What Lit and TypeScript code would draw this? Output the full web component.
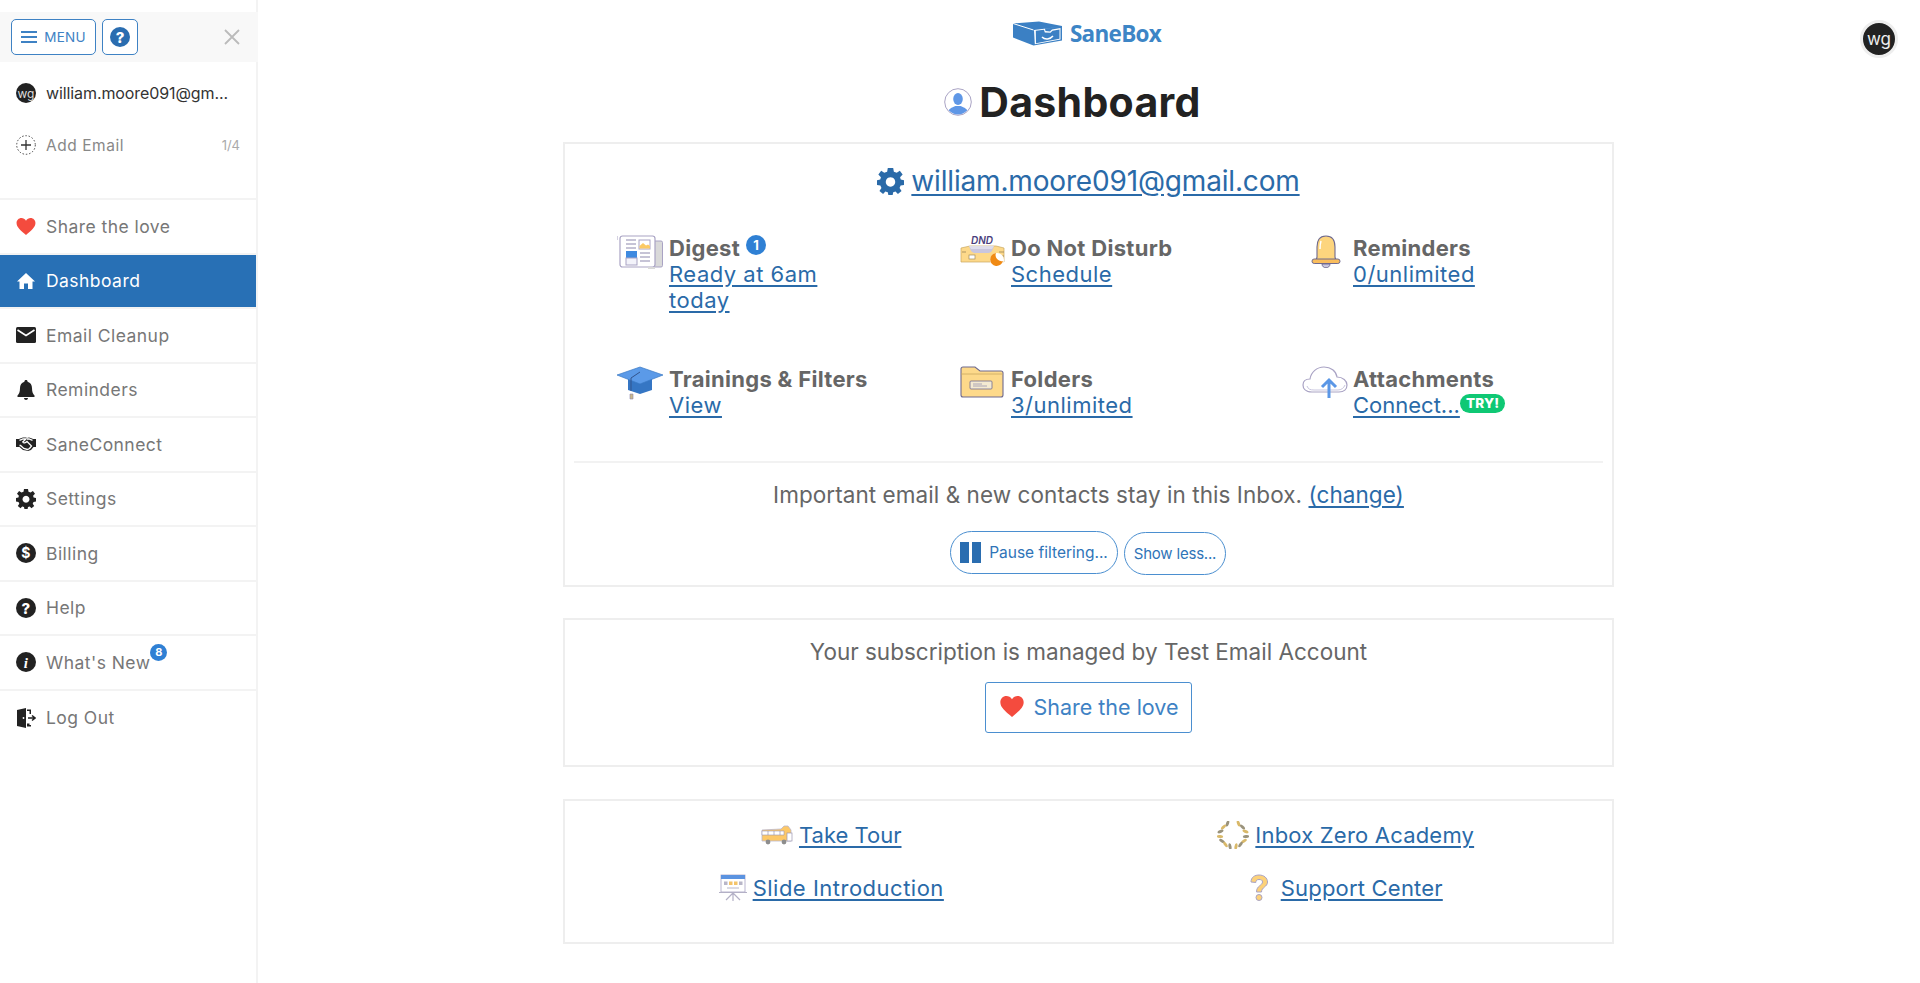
import { LitElement, html, css, svg } from "lit";
import { customElement } from "lit/decorators.js";

const heart = (w: number, h: number) => html`<svg width=${w} height=${h} viewBox="0 0 20 18"><path fill="#f44b3e" d="M10 18 C4 13 0 9.800 0 5.400 C0 2.300 2.300 0 5.200 0 C7 0 8.900 1 10 2.800 C11.100 1 13 0 14.800 0 C17.700 0 20 2.300 20 5.400 C20 9.800 16 13 10 18Z"/></svg>`;

const navIcons: Record<string, any> = {
  heart: heart(20, 17),
  home: html`<svg width="20" height="20" viewBox="0 0 20 20"><path fill="currentColor" d="M10 2 L19 10.500 H16.500 V18 H12 V12.500 H8 V18 H3.500 V10.500 H1Z"/></svg>`,
  mail: html`<svg width="20" height="16" viewBox="0 0 20 16"><rect width="20" height="16" rx="1.500" fill="currentColor"/><path d="M1.500 3 L10 8.500 L18.500 3" fill="none" stroke="#fff" stroke-width="1.600"/></svg>`,
  bell: html`<svg width="18" height="20" viewBox="0 0 18 20"><path fill="currentColor" d="M9 0 C10 0 10.600 .7 10.600 1.700 C13.600 2.500 15 5 15 8 C15 12 16 14 17.500 15.500 V17 H.5 V15.500 C2 14 3 12 3 8 C3 5 4.400 2.500 7.400 1.700 C7.400 .7 8 0 9 0Z M7 18 H11 C11 19.300 10 20 9 20 C8 20 7 19.300 7 18Z"/></svg>`,
  shake: html`<svg width="20" height="14" viewBox="0 0 20 14"><path fill="currentColor" d="M0 2 H3 L4 1.500 L7 .5 H10 L11 1 L13 .5 L16 1.500 L17 2 H20 V10 H17.500 L15 13 L12 14 L10 13.500 L7 13 L3.500 10 H0Z"/><path fill="none" stroke="#fff" stroke-width="1.300" d="M3.500 3.300 L7 2 H10 L6.800 5 C7.500 6.300 9.500 6 11 4.500 L15.500 9 L13.500 11.500 L11.500 12.500 L7.800 11.500 L4.500 8.500 L3.500 8.500 M16.500 3.300 L13 2 H11"/></svg>`,
  gear: html`<svg width="20" height="20" viewBox="0 0 20 20"><path fill="currentColor" fill-rule="evenodd" d="M8 0 H12 L12.500 2.700 L14.600 3.600 L16.900 2 L19 4.800 L17.100 6.800 L17.600 8.500 L20 9 V12.500 L17.500 13 L16.700 14.800 L18.200 17 L15.500 19.200 L13.700 17.400 L12 18 L11.600 20 H8.400 L8 18 L6.200 17.400 L4.500 19.200 L1.800 17 L3.300 14.800 L2.500 13 L0 12.500 V9 L2.400 8.500 L2.900 6.800 L1 4.800 L3.100 2 L5.400 3.600 L7.500 2.700Z M10 6.800 A3.500 3.500 0 1 0 10.001 6.800Z"/></svg>`,
  dollar: html`<svg width="20" height="20" viewBox="0 0 20 20"><circle cx="10" cy="10" r="10" fill="currentColor"/><text x="10" y="15" text-anchor="middle" font-size="14" font-weight="700" fill="#fff" font-family="Inter, sans-serif">$</text></svg>`,
  help: html`<svg width="20" height="20" viewBox="0 0 20 20"><circle cx="10" cy="10" r="10" fill="currentColor"/><text x="10" y="15.500" text-anchor="middle" font-size="15" font-weight="800" fill="#fff" font-family="Inter, sans-serif">?</text></svg>`,
  info: html`<svg width="20" height="20" viewBox="0 0 20 20"><circle cx="10" cy="10" r="10" fill="currentColor"/><text x="10" y="15.500" text-anchor="middle" font-size="15" font-weight="700" font-style="italic" fill="#fff" font-family="Liberation Serif, serif">i</text></svg>`,
  logout: html`<svg width="19" height="20" viewBox="0 0 19 20"><path fill="currentColor" d="M0 2 L9 0 V20 L0 18Z M10 1.500 H14 V6 H12.500 V3 H10Z M10 15.500 H12.500 V17 H14 V18.500 H10Z"/><circle cx="6.500" cy="10" r=".9" fill="#fff"/><path d="M11 10 H17.500 M15 7.500 L18 10 L15 12.500" stroke="currentColor" stroke-width="1.500" fill="none"/></svg>`,
};

const logo = html`<svg width="50" height="25" viewBox="0 0 50 25"><path fill="#3b80c4" d="M0 2.500 L26 .5 L49 5 L49 19.500 L20.500 24.500 L0 16.500Z"/><path fill="#fff" d="M21 9 L47.500 5.800 L32 7.800 L32.500 10 L37 10.500 L39 8.500 L47.500 7 V18.500 L21.800 23.300Z"/><path fill="#3b80c4" d="M22.800 9.800 L31 8.800 L31.800 11.500 L37.500 11.800 L39.500 9.800 L46.500 8.600 V17.800 L23 22.200Z"/><path fill="none" stroke="#fff" stroke-width="1.500" d="M29 16 C32 19 37 18.500 40 15"/><path fill="none" stroke="#fff" stroke-width="1" d="M20.500 9 L0 2.500"/></svg>`;

const person = html`<svg width="28" height="28" viewBox="0 0 28 28"><circle cx="14" cy="14" r="13.300" fill="#fff" stroke="#a9a3c4" stroke-width="1"/><clipPath id="pc"><circle cx="14" cy="14" r="12.500"/></clipPath><g clip-path="url(#pc)" fill="#5f97e6"><ellipse cx="14" cy="11" rx="4.800" ry="6"/><path d="M3 28 C3 21 8 19.500 11.500 18 H16.500 C20 19.500 25 21 25 28Z"/></g></svg>`;

const bigGear = html`<svg width="27" height="27" viewBox="0 0 20 20"><path fill="#2a6aa8" fill-rule="evenodd" d="M8 0 H12 L12.500 2.700 L14.600 3.600 L16.900 2 L19 4.800 L17.100 6.800 L17.600 8.500 L20 9 V12.500 L17.500 13 L16.700 14.800 L18.200 17 L15.500 19.200 L13.700 17.400 L12 18 L11.600 20 H8.400 L8 18 L6.200 17.400 L4.500 19.200 L1.800 17 L3.300 14.800 L2.500 13 L0 12.500 V9 L2.400 8.500 L2.900 6.800 L1 4.800 L3.100 2 L5.400 3.600 L7.500 2.700Z M10 6.800 A3.500 3.500 0 1 0 10.001 6.800Z"/></svg>`;

const digest = html`<svg width="46" height="36" viewBox="0 0 46 36"><rect x="36" y="6" width="9.500" height="26" rx="1.500" fill="#d9d9d9" stroke="#a9a3c4"/><rect x="3" y="1" width="35" height="31" rx="2.500" fill="#fff" stroke="#a9a3c4" stroke-width="1.200"/><path d="M9 5 H19 M9 9 H19 M9 13 H19 M23 18 H33 M23 22 H33 M23 26 H33" stroke="#8d88ad" stroke-width="1"/><rect x="22" y="5" width="11" height="9" fill="#fff" stroke="#a9a3c4"/><path d="M22.500 13.500 V11 L26 8 L29 10.500 L31 9.500 L33 11 V13.500Z" fill="#fbc964"/><rect x="9" y="16" width="11" height="11" fill="#3f8ae0"/><rect x="9" y="23" width="11" height="7" fill="#f3f3fa" stroke="#a9a3c4"/><path d="M0 1 V5" stroke="#a9a3c4"/><rect x="31" y="32" width="7" height="2" fill="#d9d9d9"/></svg>`;

const dnd = html`<svg class="nudge" width="45" height="33" viewBox="0 0 45 33"><text x="22" y="9" text-anchor="middle" font-size="10" font-style="italic" font-weight="600" fill="#4a3f7c" font-family="Inter, sans-serif">DND</text><path d="M1 13 L10 11 H36 L44 13 V27 H1Z" fill="#fdd98a" stroke="#c9a860" stroke-width=".7"/><path d="M9 11 H34 C32 17 31 18 27 18 H16 C12 18 11 17 9 11Z" fill="#c9c6de"/><path d="M9 11 L11 14 H32 L34 11" fill="#fff" opacity=".4"/><rect x="9" y="20" width="6" height="4" fill="#fff" stroke="#a08c5b" stroke-width=".7"/><path d="M2 17 H6 M39 17 H44 M39 21 H44" stroke="#8a7a50" stroke-width=".7"/><circle cx="37" cy="25" r="7" fill="#fff"/><path d="M36 18 A6.500 6.500 0 1 0 43 26 A6 6 0 0 1 36 18Z" fill="#f08a14"/></svg>`;

const bellY = html`<svg class="bell" width="30" height="33" viewBox="0 0 30 33"><path d="M15 1 C22 1 24 6 24 12 V22 C24 24 25 25 27 25.500 H3 C5 25 6 24 6 22 V12 C6 6 8 1 15 1Z" fill="#fdd57e" stroke="#6f6a8f" stroke-width="1.100"/><rect x="1" y="24" width="28" height="4.500" rx="2.200" fill="#f9bd5d" stroke="#6f6a8f" stroke-width="1"/><path d="M11 29 C11 34 19 34 19 29Z" fill="#c9c6de" stroke="#6f6a8f" stroke-width=".9"/><path d="M10 6 C9 9 9 11 9 14" stroke="#fff" stroke-width="1.500" fill="none"/></svg>`;

const cap = html`<svg width="46" height="34" viewBox="0 0 46 34"><path d="M11 13 V24 L23 28 L35 24 V13Z" fill="#3576c4"/><path d="M0 9 L23 1 L46 9 L23 18Z" fill="#5b9ae8" stroke="#3b7ac4" stroke-width=".7"/><path d="M23 6 L14 12 V25" fill="none" stroke="#32548d" stroke-width="1"/><path d="M13 28 H16 L16 33 H13Z" fill="#c9b88a" stroke="#8d88ad" stroke-width=".6"/></svg>`;

const folder = html`<svg class="nudge" width="44" height="32" viewBox="0 0 44 32"><path d="M1 3 C1 1.500 2 1 3 1 H15 L20 5 H41 C42.500 5 43 6 43 7 V29 C43 30.500 42 31 41 31 H3 C2 31 1 30.500 1 29Z" fill="#fdd98a" stroke="#6f6a8f" stroke-width="1.100"/><path d="M1 8 H43" stroke="#c9a860" stroke-width=".8"/><rect x="10" y="15" width="22" height="8" rx="1" fill="#f4ead1" stroke="#6f6a8f" stroke-width=".8"/><path d="M13 18 H22 M13 20 H27" stroke="#9a96b0" stroke-width=".8"/></svg>`;

const cloud = html`<svg class="nudge" width="46" height="33" viewBox="0 0 46 33"><path d="M10 26 C3 26 1 22 1 19 C1 15 4 13 8 13 C9 6 15 1 22 1 C29 1 34 5 35 11 C41 11 45 15 45 19 C45 23 42 26 37 26Z" fill="#fff" stroke="#a9a3c4" stroke-width="1.200"/><path d="M5 20 C6 23 8 24 12 24 H36 C39 24 42 22 43 19" fill="none" stroke="#c9c6de" stroke-width="1"/><path d="M27 32 V15 M20 21 L27 14 L34 21" fill="none" stroke="#5b97e6" stroke-width="3"/></svg>`;

const bus = html`<svg width="32" height="20" viewBox="0 0 32 20"><path d="M1 5 L20 4 L23 1 H27 L30 5 V16 H1Z" fill="#fdc867" stroke="#b9b6cc" stroke-width=".8"/><path d="M1 6 H23 V10 H1Z" fill="#fff" stroke="#9a96b0" stroke-width=".6"/><path d="M7 6 V10 M13 6 V10 M19 6 V10" stroke="#9a96b0" stroke-width=".7"/><rect x="26" y="8" width="5" height="8" fill="#fff" stroke="#9a96b0" stroke-width=".7"/><circle cx="7" cy="17" r="2.400" fill="#8d8d8d"/><circle cx="23" cy="17" r="2.400" fill="#8d8d8d"/></svg>`;

const leaves: number[][] = [[10.5, 2.5], [6.5, 6], [3.5, 10.5], [3, 15.5], [5, 20], [8.5, 23.5], [13, 25.5]];
const laurel = html`<svg width="32" height="28" viewBox="0 0 32 28">${leaves.map(([x, y], i) => svg`<ellipse cx=${x} cy=${y} rx="3.200" ry="1.500" fill=${i % 2 ? "#d9b96a" : "#9a937c"} transform="rotate(${i * 25 - 70} ${x} ${y})"/><ellipse cx=${32 - x} cy=${y} rx="3.200" ry="1.500" fill=${i % 2 ? "#9a937c" : "#d9b96a"} transform="rotate(${70 - i * 25} ${32 - x} ${y})"/>`)}</svg>`;

const slide = html`<svg width="28" height="27" viewBox="0 0 28 27"><rect x="2" y="1" width="24" height="17" fill="#fff" stroke="#a9a3c4" stroke-width=".8"/><rect x="2" y="1" width="24" height="4" fill="#5b93e0"/><rect x="5" y="7.500" width="3.500" height="3.500" fill="#b8b6c8"/><rect x="10" y="7.500" width="3.500" height="3.500" fill="#f4c46a"/><rect x="15" y="7.500" width="3.500" height="3.500" fill="#f4c46a"/><rect x="20" y="7.500" width="3.500" height="3.500" fill="#b8b6c8"/><path d="M8 14 H20" stroke="#b8b6c8"/><path d="M0 18.500 H28 M14 18.500 V27 M14 19 L7 26 M14 19 L21 26" stroke="#b3b0c6" stroke-width="1.200"/></svg>`;

const qmark = html`<svg class="qm" width="20" height="28" viewBox="0 0 20 28"><path d="M2 8 C2 3 6 1 10 1 C15 1 18.500 4 18.500 8 C18.500 13 12.500 13 12.500 18 H7.500 C7.500 11.500 13.500 11.500 13.500 8 C13.500 6 12 5.500 10 5.500 C8 5.500 6.800 6.500 6.800 8.500Z" fill="#fdd27a" stroke="#a9a3c4" stroke-width="1"/><circle cx="10" cy="23.500" r="3" fill="#fdd27a" stroke="#a9a3c4" stroke-width="1"/></svg>`;

const nav = [
  ["heart", "Share the love"],
  ["home", "Dashboard"],
  ["mail", "Email Cleanup"],
  ["bell", "Reminders"],
  ["shake", "SaneConnect"],
  ["gear", "Settings"],
  ["dollar", "Billing"],
  ["help", "Help"],
  ["info", "What's New"],
  ["logout", "Log Out"],
];

@customElement("app-root")
export class AppRoot extends LitElement {
  static styles = css`
    :host {
      display: grid;
      grid-template-columns: 257px 1fr;
      height: 983px;
      overflow: hidden;
      position: relative;
      background: #fff;
      font-family: Inter, "Noto Sans", sans-serif;
      color: #666;
    }
    a { color: #2a6aa8; text-decoration: underline; text-underline-offset: 3px; }
    button { font: inherit; background: #fff; cursor: pointer; }

    .side { padding-top: 12px; display: flex; flex-direction: column; border-right: 2px solid #f3f3f3; margin-right: -1px; height: 971px; }
    .side-head { height: 50px; background: #f8f8f8; margin-right: -2px; display: flex; align-items: center; padding-left: 11px; gap: 6px; box-sizing: border-box; position: relative; }
    .menu-btn { width: 85px; height: 36px; border: 1.500px solid #3e82c4; border-radius: 5px; color: #3e82c4; display: flex; align-items: center; justify-content: center; gap: 7px; padding: 0; font-size: 13.500px; letter-spacing: .2px; }
    .help-btn { width: 36px; height: 36px; border: 1.500px solid #3e82c4; border-radius: 5px; padding: 0; display: flex; align-items: center; justify-content: center; }
    .close { margin-left: auto; margin-right: 18px; display: flex; }
    .acct { height: 52px; margin-top: 5px; display: flex; align-items: center; padding-left: 16px; gap: 10px; color: #333; font-size: 16px; letter-spacing: -.1px; white-space: nowrap; }
    .acct-av { width: 20px; height: 20px; border-radius: 50%; background: #222; color: #ddd; font-size: 12px; display: flex; align-items: center; justify-content: center; flex: none; }
    .add { height: 52px; display: flex; align-items: center; padding: 0 16px; gap: 10px; color: #888; font-size: 15.500px; letter-spacing: .55px; }
    .add .count { margin-left: auto; font-size: 13px; color: #aaa; letter-spacing: 0; }
    .items { margin-top: 27px; border-top: 2px solid #f3f3f3; }
    .item { height: 54.500px; box-sizing: border-box; border-bottom: 2px solid #f3f3f3; display: flex; align-items: center; padding-left: 16px; color: #777; font-size: 17.500px; letter-spacing: .45px; white-space: nowrap; position: relative; }
    .item:last-child { border-bottom: 0; }
    .item .ic { width: 20px; height: 20px; display: flex; align-items: center; justify-content: center; color: #222; margin-right: 10px; flex: none; }
    .item.active { background: #2870b5; color: #fff; }
    .item.active .ic { color: #fff; }
    .nbadge { width: 17px; height: 17px; border-radius: 50%; background: #2f80d4; color: #fff; font-size: 11px; font-weight: 700; display: inline-flex; align-items: center; justify-content: center; margin-top: -20px; letter-spacing: 0; }

    .main { display: flex; flex-direction: column; align-items: center; min-width: 0; }
    .brand { height: 24px; margin-top: 21px; display: flex; align-items: center; gap: 7px; font-family: "Open Sans", sans-serif; color: #3d85c6; font-size: 22.500px; font-weight: 700; letter-spacing: -.7px; margin-right: 3px; }
    .title { margin: 31px 32px 0 0; height: 52px; display: flex; align-items: center; gap: 7px; color: #222; font-size: 41px; font-weight: 700; letter-spacing: .3px; }
    .card { width: 1051px; box-sizing: border-box; border: 2px solid #eee; }
    .c1 { margin-top: 14px; height: 445px; padding-top: 20px; }
    .email { display: flex; justify-content: center; align-items: center; gap: 7px; height: 34px; font-size: 28px; letter-spacing: -.17px; }
    .grid { display: grid; grid-template-columns: repeat(3, 342px); grid-template-rows: 131px 95px; margin-top: 37px; padding-left: 52px; }
    .feat { display: grid; grid-template-columns: 52px 1fr; }
    .feat .ic { display: flex; align-items: flex-start; height: 36px; }
    .nudge { margin-left: 1px; }
    .bell { margin-left: 10px; }
    .feat .txt { font-size: 22px; line-height: 26px; white-space: nowrap; letter-spacing: .5px; }
    .feat b { color: #666; font-weight: 700; display: block; height: 26px; letter-spacing: .3px; }
    .dbadge { display: inline-flex; width: 20px; height: 20px; border-radius: 50%; background: #2f80d4; color: #fff; font-size: 13px; align-items: center; justify-content: center; font-weight: 700; vertical-align: 6px; margin-left: 6px; letter-spacing: 0; }
    .try { display: inline-block; background: #0fc874; color: #fff; font-size: 13.500px; line-height: 19px; height: 19px; border-radius: 10px; font-weight: 800; padding: 0 6px; vertical-align: 5px; letter-spacing: .2px; }
    .connect { letter-spacing: 0; }
    hr { border: 0; border-top: 2px solid #f2f2f2; margin: 0 9px; }
    .imp { text-align: center; height: 34px; line-height: 34px; margin-top: 15px; font-size: 22.500px; letter-spacing: .06px; }
    .btns { display: flex; justify-content: center; align-items: flex-start; gap: 6px; margin-top: 19px; margin-left: -1px; }
    .pill { height: 43px; border: 1.500px solid #4b8fd0; border-radius: 22px; color: #2f74b8; display: flex; align-items: center; justify-content: center; padding: 0; font-size: 15.500px; }
    .pause { width: 168px; gap: 8px; }
    .pause i { width: 21px; height: 21px; display: block; background: linear-gradient(90deg, #2a6db0 0 9px, transparent 9px 12px, #2a6db0 12px); }
    .less { width: 102px; margin-top: 1px; font-size: 15px; letter-spacing: -.2px; }
    .c2 { margin-top: 31px; height: 149px; padding-top: 15px; }
    .sub { text-align: center; height: 34px; line-height: 34px; font-size: 22.500px; }
    .share { display: flex; width: 207px; height: 51px; margin: 13px auto 0; box-sizing: border-box; border: 1.500px solid #4b8fd0; border-radius: 3px; color: #3e82c4; font-size: 21.500px; align-items: center; justify-content: center; gap: 9px; padding: 0 0 2px 2px; }
    .c3 { margin-top: 32px; height: 145px; display: grid; grid-template-columns: 1fr 1fr; grid-template-rows: 52.500px 52.500px; padding: 8px 9px 0 9px; }
    .lk { display: flex; align-items: center; justify-content: center; gap: 6px; font-size: 22px; letter-spacing: .2px; white-space: nowrap; }
    .qm { margin-right: 6px; }
    .slide-l { letter-spacing: .5px; }
    .tour-l { letter-spacing: 0; }
    .avatar { position: absolute; right: 22px; top: 20px; width: 32px; height: 32px; border-radius: 50%; background: #222; color: #eee; font-size: 17px; display: flex; align-items: center; justify-content: center; border: 3.500px solid #eee; }
  `;

  feat(icon: any, title: any, link: any, extra: any = "", cls = "") {
    return html`<div class="feat"><div class="ic">${icon}</div><div class="txt"><b>${title}</b><a class=${cls} href="#">${link}</a>${extra}</div></div>`;
  }

  render() {
    return html`
      <aside class="side">
        <div class="side-head">
          <button class="menu-btn"><svg width="16" height="12" viewBox="0 0 16 12"><path d="M0 1 H16 M0 6 H16 M0 11 H16" stroke="#3e82c4" stroke-width="1.800"/></svg>MENU</button>
          <button class="help-btn"><svg width="20" height="20" viewBox="0 0 20 20"><circle cx="10" cy="10" r="10" fill="#2a6db0"/><text x="10" y="15.500" text-anchor="middle" font-size="15" font-weight="800" fill="#fff" font-family="Inter, sans-serif">?</text></svg></button>
          <span class="close"><svg width="16" height="16" viewBox="0 0 16 16"><path d="M1 1 L15 15 M15 1 L1 15" stroke="#bbb" stroke-width="1.800"/></svg></span>
        </div>
        <div class="acct"><span class="acct-av">wg</span>william.moore091@gm...</div>
        <div class="add"><svg width="20" height="20" viewBox="0 0 20 20"><circle cx="10" cy="10" r="9.300" fill="none" stroke="#444" stroke-dasharray="1.500 1.800"/><path d="M5 10 H15 M10 5 V15" stroke="#333" stroke-width="1.300"/></svg>Add Email<span class="count">1/4</span></div>
        <div class="items">
          ${nav.map(([ic, label]) => html`<div class="item ${label === "Dashboard" ? "active" : ""}"><span class="ic">${navIcons[ic]}</span>${label}${label === "What's New" ? html`<span class="nbadge">8</span>` : ""}</div>`)}
        </div>
      </aside>
      <main class="main">
        <div class="brand">${logo}<span>SaneBox</span></div>
        <h1 class="title">${person}<span>Dashboard</span></h1>
        <section class="card c1">
          <div class="email">${bigGear}<a href="#">william.moore091@gmail.com</a></div>
          <div class="grid">
            ${this.feat(digest, html`Digest<span class="dbadge">1</span>`, html`Ready at 6am<br />today`)}
            ${this.feat(dnd, "Do Not Disturb", "Schedule")}
            ${this.feat(bellY, "Reminders", "0/unlimited")}
            ${this.feat(cap, "Trainings & Filters", "View")}
            ${this.feat(folder, "Folders", "3/unlimited")}
            ${this.feat(cloud, "Attachments", "Connect...", html`<span class="try">TRY!</span>`, "connect")}
          </div>
          <hr />
          <div class="imp">Important email &amp; new contacts stay in this Inbox. <a href="#">(change)</a></div>
          <div class="btns">
            <button class="pill pause"><i></i>Pause filtering...</button>
            <button class="pill less">Show less...</button>
          </div>
        </section>
        <section class="card c2">
          <div class="sub">Your subscription is managed by Test Email Account</div>
          <button class="share">${heart(24, 21)}Share the love</button>
        </section>
        <section class="card c3">
          <div class="lk">${bus}<a class="tour-l" href="#">Take Tour</a></div>
          <div class="lk">${laurel}<a href="#">Inbox Zero Academy</a></div>
          <div class="lk">${slide}<a class="slide-l" href="#">Slide Introduction</a></div>
          <div class="lk">${qmark}<a href="#">Support Center</a></div>
        </section>
      </main>
      <div class="avatar">wg</div>
    `;
  }
}
